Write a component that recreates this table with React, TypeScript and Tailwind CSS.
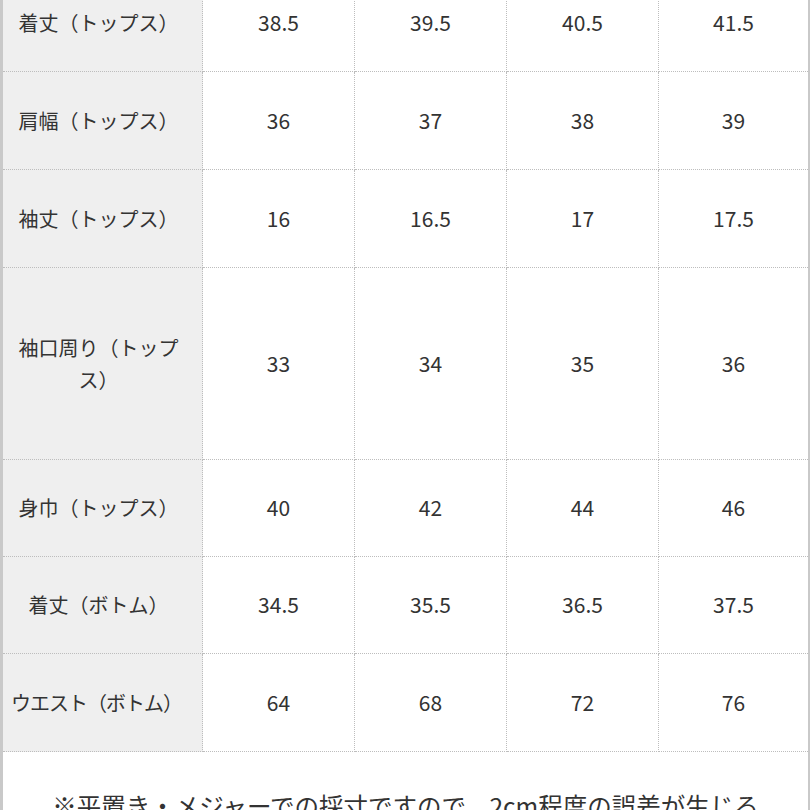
import React from 'react';

const rows: { label: string; values: string[]; h: string; nowrap?: boolean }[] = [
  { label: '着丈（トップス）', values: ['38.5', '39.5', '40.5', '41.5'], h: 'h-[98px]' },
  { label: '肩幅（トップス）', values: ['36', '37', '38', '39'], h: 'h-[98px]' },
  { label: '袖丈（トップス）', values: ['16', '16.5', '17', '17.5'], h: 'h-[98px]' },
  { label: '袖口周り（トップス）', values: ['33', '34', '35', '36'], h: 'h-[192px]' },
  { label: '身巾（トップス）', values: ['40', '42', '44', '46'], h: 'h-[97px]' },
  { label: '着丈（ボトム）', values: ['34.5', '35.5', '36.5', '37.5'], h: 'h-[97px]' },
  { label: 'ウエスト（ボトム）', values: ['64', '68', '72', '76'], h: 'h-[98px]', nowrap: true },
];

const App: React.FC = () => {
  return (
    <div
      className="w-[810px] h-[810px] overflow-hidden bg-white text-[#333]"
      style={{ fontFamily: '"Noto Sans CJK JP", "Noto Sans", sans-serif' }}
    >
      <div className="-mt-[26px] border-l-[3px] border-r-[2px] border-[#c9c9c9] min-h-[900px]">
        {/* Size table */}
        <div className="grid grid-cols-[200px_152px_152px_152px_149px]">
          {rows.map((row) => (
            <React.Fragment key={row.label}>
              <div
                className={`${row.h} flex items-center justify-center text-center bg-[#efefef] border-r border-b border-dotted border-[#bdbdbd] pl-1 pr-3 text-[20px] leading-[32px] ${
                  row.nowrap ? 'whitespace-nowrap tracking-[-1px] pr-4' : ''
                }`}
              >
                {row.label}
              </div>
              {row.values.map((v, i) => (
                <div
                  key={i}
                  className={`${row.h} flex items-center justify-center border-b border-dotted border-[#bdbdbd] text-[21px] ${
                    i < 3 ? 'border-r' : ''
                  }`}
                >
                  {v}
                </div>
              ))}
            </React.Fragment>
          ))}
        </div>

        {/* Note */}
        <p className="px-[20px] pt-[36px] text-center text-[24.5px] leading-[36px]">
          ※平置き・メジャーでの採寸ですので、2cm程度の誤差が生じる
          <br />
          場合がございます。
        </p>
      </div>
    </div>
  );
};

export default App;
